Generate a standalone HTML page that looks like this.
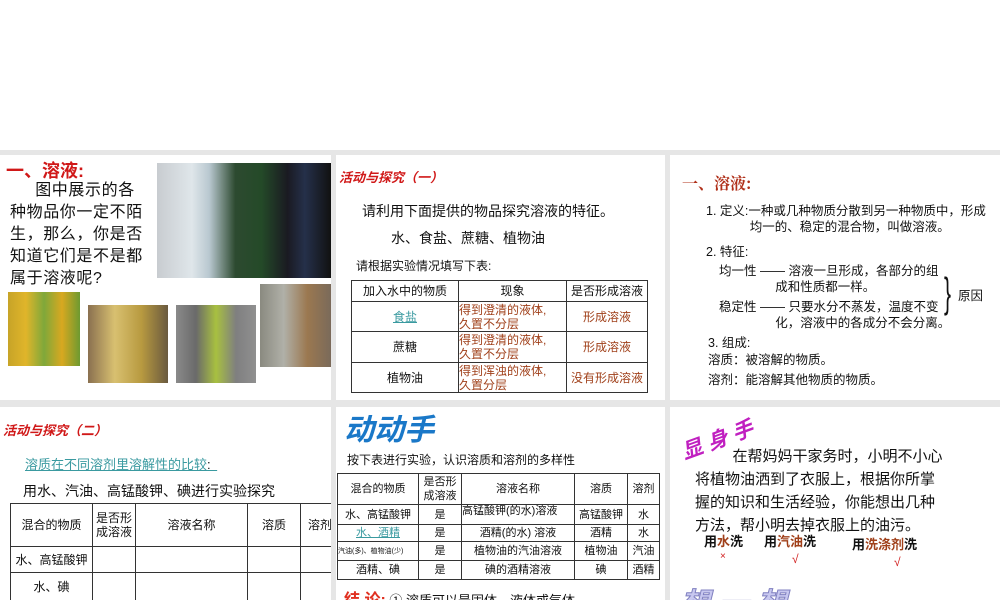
<!DOCTYPE html>
<html><head><meta charset="utf-8"><style>
*{margin:0;padding:0;box-sizing:border-box}
body{width:1000px;height:600px;background:#fff;position:relative;overflow:hidden;font-family:"Liberation Sans","Noto Sans CJK SC",sans-serif;color:#111}
.grey{position:absolute;left:0;top:150px;width:1000px;height:450px;background:#e6e6e6}
.p{position:absolute;background:#fff;overflow:hidden}
.a{position:absolute;white-space:nowrap}
.red{color:#d01818;font-weight:bold}
.br{color:#a0401a}
table{border-collapse:collapse;position:absolute;font-size:12px;table-layout:fixed}
td{border:1px solid #333;text-align:center;line-height:14px;padding:0}
.ph{position:absolute}
</style></head><body>
<div class="grey"></div>

<!-- panel 1 -->
<div class="p" style="left:0;top:155px;width:331px;height:245px">
<div class="a red" style="left:6px;top:2px;font-size:18px">一、溶液:</div>
<div class="a" style="left:10px;top:25px;font-size:16px;line-height:22px;letter-spacing:0.6px">&emsp;&ensp;图中展示的各<br>种物品你一定不陌<br>生，那么，你是否<br>知道它们是不是都<br>属于溶液呢?</div>
<div class="ph" style="left:157px;top:8px;width:174px;height:115px;background:linear-gradient(90deg,#c8ccd0 0,#dfe6ea 20%,#b9c8d0 30%,#2d4a30 45%,#244a28 60%,#1a1a22 75%,#25304a 85%,#111 100%)"></div>
<div class="ph" style="left:8px;top:137px;width:72px;height:74px;background:linear-gradient(90deg,#c7a428,#e0b52a,#7fa83a,#d8a820,#6d9a30)"></div>
<div class="ph" style="left:88px;top:150px;width:80px;height:78px;background:linear-gradient(90deg,#8a7050,#d8c070,#b89a40,#6a5a40)"></div>
<div class="ph" style="left:176px;top:150px;width:80px;height:78px;background:linear-gradient(90deg,#8a8a8a,#6a6a6a,#a8c040,#7f7f80,#909090)"></div>
<div class="ph" style="left:260px;top:129px;width:71px;height:83px;background:linear-gradient(90deg,#8a8a80,#b0b0a8,#9b7850,#7a6a5a)"></div>
</div>

<!-- panel 2 -->
<div class="p" style="left:336px;top:155px;width:329px;height:245px">
<div class="a red" style="left:3px;top:12px;font-size:13px;font-style:italic">活动与探究（一）</div>
<div class="a" style="left:26px;top:46px;font-size:14px">请利用下面提供的物品探究溶液的特征。</div>
<div class="a" style="left:55px;top:73px;font-size:14px">水、食盐、蔗糖、植物油</div>
<div class="a" style="left:20px;top:102px;font-size:12px">请根据实验情况填写下表:</div>
<table style="left:15px;top:125px;width:297px">
<tr style="height:21px"><td style="width:107px">加入水中的物质</td><td style="width:108px">现象</td><td>是否形成溶液</td></tr>
<tr style="height:30px"><td style="color:#3a9aa0;text-decoration:underline">食盐</td><td class="br" style="text-align:left">得到澄清的液体,<br>久置不分层</td><td class="br">形成溶液</td></tr>
<tr style="height:31px"><td>蔗糖</td><td class="br" style="text-align:left">得到澄清的液体,<br>久置不分层</td><td class="br">形成溶液</td></tr>
<tr style="height:30px"><td>植物油</td><td class="br" style="text-align:left">得到浑浊的液体,<br>久置分层</td><td class="br">没有形成溶液</td></tr>
</table>
</div>

<!-- panel 3 -->
<div class="p" style="left:670px;top:155px;width:330px;height:245px">
<div class="a" style="left:12px;top:16px;font-size:16px;font-weight:bold;color:#b0301a;font-family:'Noto Serif CJK SC',serif">一、溶液:</div>
<div class="a" style="left:36px;top:48px;font-size:12.5px;line-height:16px">1. 定义:一种或几种物质分散到另一种物质中，形成<br>&emsp;&emsp;&emsp;&ensp;均一的、稳定的混合物，叫做溶液。</div>
<div class="a" style="left:36px;top:86px;font-size:12.5px">2. 特征:</div>
<div class="a" style="left:49px;top:108px;font-size:12.5px;line-height:16px">均一性 —— 溶液一旦形成，各部分的组<br>&emsp;&emsp;&emsp;&emsp;&ensp;成和性质都一样。</div>
<div class="a" style="left:49px;top:144px;font-size:12.5px;line-height:16px">稳定性 —— 只要水分不蒸发，温度不变<br>&emsp;&emsp;&emsp;&emsp;&ensp;化，溶液中的各成分不会分离。</div>
<div class="a" style="left:274px;top:106px;font-size:42px;line-height:64px;font-weight:100;transform:scaleX(.5);transform-origin:left">}</div>
<div class="a" style="left:288px;top:130px;font-size:12.5px">原因</div>
<div class="a" style="left:38px;top:180px;font-size:12.5px;line-height:17px">3. 组成:<br>溶质：被溶解的物质。<br><span style="line-height:22px">溶剂：能溶解其他物质的物质。</span></div>
</div>

<!-- panel 4 -->
<div class="p" style="left:0;top:407px;width:331px;height:193px">
<div class="a red" style="left:3px;top:13px;font-size:13px;font-style:italic">活动与探究（二）</div>
<div class="a" style="left:25px;top:47px;font-size:13px;color:#3a9aa0;text-decoration:underline">溶质在不同溶剂里溶解性的比较<span style="color:#111">:&ensp;</span></div>
<div class="a" style="left:23px;top:74px;font-size:14px">用水、汽油、高锰酸钾、碘进行实验探究</div>
<table style="left:10px;top:96px;width:330px">
<tr style="height:43px"><td style="width:82px">混合的物质</td><td style="width:43px">是否形<br>成溶液</td><td style="width:112px">溶液名称</td><td style="width:53px">溶质</td><td>溶剂</td></tr>
<tr style="height:26px"><td>水、高锰酸钾</td><td></td><td></td><td></td><td></td></tr>
<tr style="height:28px"><td>水、碘</td><td></td><td></td><td></td><td></td></tr>
</table>
</div>

<!-- panel 5 -->
<div class="p" style="left:336px;top:407px;width:329px;height:193px">
<div class="a" style="left:8px;top:-2px;font-size:30px;font-weight:bold;font-style:italic;color:#1a78c8">动动手</div>
<div class="a" style="left:11px;top:44px;font-size:12px">按下表进行实验，认识溶质和溶剂的多样性</div>
<table style="left:1px;top:66px;width:323px;font-size:11px">
<tr style="height:31px"><td style="width:81px">混合的物质</td><td style="width:43px">是否形<br>成溶液</td><td style="width:113px">溶液名称</td><td style="width:53px">溶质</td><td>溶剂</td></tr>
<tr style="height:20px"><td>水、高锰酸钾</td><td>是</td><td style="text-align:left;line-height:12px;vertical-align:top">高锰酸钾(的水)溶液</td><td>高锰酸钾</td><td>水</td></tr>
<tr style="height:17px"><td style="color:#3a9aa0;text-decoration:underline">水、酒精</td><td>是</td><td>酒精(的水) 溶液</td><td>酒精</td><td>水</td></tr>
<tr style="height:19px"><td style="font-size:7px;text-align:left;line-height:9px">汽油(多)、植物油(少)</td><td>是</td><td>植物油的汽油溶液</td><td>植物油</td><td>汽油</td></tr>
<tr style="height:19px"><td>酒精、碘</td><td>是</td><td>碘的酒精溶液</td><td>碘</td><td>酒精</td></tr>
</table>
<div class="a" style="left:8px;top:179px;font-size:13px"><span class="red" style="color:#e03020;font-size:16px">结 论:</span> ① 溶质可以是固体、液体或气体</div>
</div>

<!-- panel 6 -->
<div class="p" style="left:670px;top:407px;width:330px;height:193px">
<div class="a" style="left:12px;top:30px;font-size:21px;font-weight:bold;font-style:italic;color:#c020c0;transform:rotate(-20deg);transform-origin:left center">显 身 手</div>
<div class="a" style="left:25px;top:38px;font-size:15px;line-height:23px">&emsp;&emsp;&ensp;在帮妈妈干家务时，小明不小心<br>将植物油洒到了衣服上，根据你所掌<br>握的知识和生活经验，你能想出几种<br>方法，帮小明去掉衣服上的油污。</div>
<div class="a" style="left:34px;top:124px;font-size:13px;font-weight:bold">用<span class="br">水</span>洗</div>
<div class="a" style="left:94px;top:124px;font-size:13px;font-weight:bold">用<span class="br">汽油</span>洗</div>
<div class="a" style="left:182px;top:127px;font-size:13px;font-weight:bold">用<span class="br">洗涤剂</span>洗</div>
<div class="a" style="left:50px;top:144px;font-size:10px;color:#d01818">×</div>
<div class="a" style="left:122px;top:145px;font-size:12px;color:#d01818">√</div>
<div class="a" style="left:224px;top:148px;font-size:12px;color:#d01818">√</div>
<div class="a" style="left:10px;top:172px;font-size:30px;font-weight:bold;font-style:italic;color:#c8c8f0;-webkit-text-stroke:1px #8080c0">想 一 想</div>
</div>
</body></html>
